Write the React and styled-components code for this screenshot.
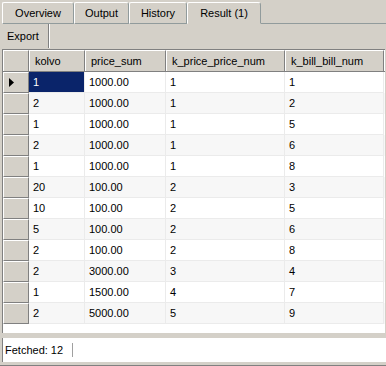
import React from 'react'
import styled, { createGlobalStyle } from 'styled-components'

const GlobalStyle = createGlobalStyle`
  html, body {
    margin: 0;
    padding: 0;
    background: #d4d0c8;
  }
  body {
    font-family: "Liberation Sans", Arial, sans-serif;
    font-size: 11px;
    color: #000;
  }
`

const tabs = [
  { label: 'Overview', w: 72 },
  { label: 'Output', w: 55 },
  { label: 'History', w: 58 },
  { label: 'Result (1)', w: 74, active: true },
]

const columns = [
  { title: 'kolvo', w: 56 },
  { title: 'price_sum', w: 81 },
  { title: 'k_price_price_num', w: 119 },
  { title: 'k_bill_bill_num', w: 99 },
]

const rows = [
  ['1', '1000.00', '1', '1'],
  ['2', '1000.00', '1', '2'],
  ['1', '1000.00', '1', '5'],
  ['2', '1000.00', '1', '6'],
  ['1', '1000.00', '1', '8'],
  ['20', '100.00', '2', '3'],
  ['10', '100.00', '2', '5'],
  ['5', '100.00', '2', '6'],
  ['2', '100.00', '2', '8'],
  ['2', '3000.00', '3', '4'],
  ['1', '1500.00', '4', '7'],
  ['2', '5000.00', '5', '9'],
]

const Frame = styled.div`
  width: 386px;
  height: 366px;
  display: flex;
  flex-direction: column;
  background: #d4d0c8;
  overflow: hidden;
`

const TabBar = styled.div`
  display: flex;
  height: 24px;
  padding: 2px 0 0 2px;
  box-sizing: border-box;
  align-items: stretch;
  position: relative;
  &::after {
    content: '';
    flex: 1;
    border-bottom: 1px solid #919b9c;
  }
`

const Tab = styled.div`
  width: ${p => p.$w}px;
  box-sizing: border-box;
  display: flex;
  align-items: center;
  justify-content: center;
  padding-bottom: 1px;
  border-top: 1px solid #fff;
  border-left: 1px solid #fff;
  border-right: 1px solid #919b9c;
  border-bottom: 1px solid ${p => (p.$active ? '#d4d0c8' : '#919b9c')};
  border-top-left-radius: 2px;
  border-top-right-radius: 3px;
  background: #d4d0c8;
`

const Toolbar = styled.div`
  display: flex;
  height: 25px;
  padding-left: 2px;
  box-sizing: border-box;
`

const ToolButton = styled.div`
  display: flex;
  align-items: center;
  padding: 0 9px 0 5px;
  border-right: 1px solid #808080;
  box-shadow: 1px 0 0 #fff;
  margin: 0 0 1px 0;
`

const Grid = styled.div`
  margin-left: 2px;
  width: 383px;
  height: 284px;
  background: #fff;
  border-top: 1px solid #808080;
  border-left: 1px solid #808080;
  box-sizing: border-box;
`

const HeaderRow = styled.div`
  display: flex;
  height: 22px;
  border-bottom: 1px solid #808080;
  box-sizing: border-box;
`

const HeadCell = styled.div`
  width: ${p => p.$w}px;
  box-sizing: border-box;
  display: flex;
  align-items: center;
  padding-left: 5px;
  background: #d4d0c8;
  border-left: 1px solid #fff;
  border-top: 1px solid #fff;
  border-right: 1px solid #808080;
`

const Row = styled.div`
  display: flex;
  height: 21px;
  background: ${p => (p.$alt ? '#f7f7f7' : '#fff')};
`

const RowHead = styled.div`
  width: 26px;
  box-sizing: border-box;
  display: flex;
  align-items: center;
  padding-left: 5px;
  background: #d4d0c8;
  border-top: 1px solid #fff;
  border-left: 1px solid #fff;
  border-right: 1px solid #808080;
  border-bottom: 1px solid #808080;
`

const Cell = styled.div`
  width: ${p => p.$w}px;
  box-sizing: border-box;
  display: flex;
  align-items: center;
  padding-left: 4px;
  border-right: 1px solid #ebebeb;
  border-bottom: 1px solid #ebebeb;
  background: ${p => (p.$selected ? '#0a246a' : 'transparent')};
  color: ${p => (p.$selected ? '#fff' : '#000')};
`

const Splitter = styled.div`
  height: 5px;
`

const StatusBar = styled.div`
  margin-left: 2px;
  height: 24px;
  background: #fff;
  border-left: 1px solid #808080;
  display: flex;
  align-items: center;
  box-sizing: border-box;
`

const StatusText = styled.span`
  padding: 0 9px 0 2px;
  border-right: 1px solid #a0a0a0;
  line-height: 14px;
`

const BottomEdge = styled.div`
  margin-top: auto;
  height: 1px;
  background: #808080;
`

const Pointer = () => (
  <svg width="5" height="9" viewBox="0 0 5 9">
    <path d="M0 0 L5 4.5 L0 9 Z" fill="#000" />
  </svg>
)

export default function App() {
  return (
    <Frame>
      <GlobalStyle />
      <TabBar>
        {tabs.map(t => (
          <Tab key={t.label} $w={t.w} $active={t.active}>{t.label}</Tab>
        ))}
      </TabBar>
      <Toolbar>
        <ToolButton>Export</ToolButton>
      </Toolbar>
      <Grid>
        <HeaderRow>
          <HeadCell $w={26} />
          {columns.map(c => (
            <HeadCell key={c.title} $w={c.w}>{c.title}</HeadCell>
          ))}
        </HeaderRow>
        {rows.map((r, i) => (
          <Row key={i} $alt={i % 2 === 1}>
            <RowHead>{i === 0 && <Pointer />}</RowHead>
            {r.map((v, j) => (
              <Cell key={j} $w={columns[j].w} $selected={i === 0 && j === 0}>{v}</Cell>
            ))}
          </Row>
        ))}
      </Grid>
      <Splitter />
      <StatusBar>
        <StatusText>Fetched: 12</StatusText>
      </StatusBar>
      <BottomEdge />
    </Frame>
  )
}
